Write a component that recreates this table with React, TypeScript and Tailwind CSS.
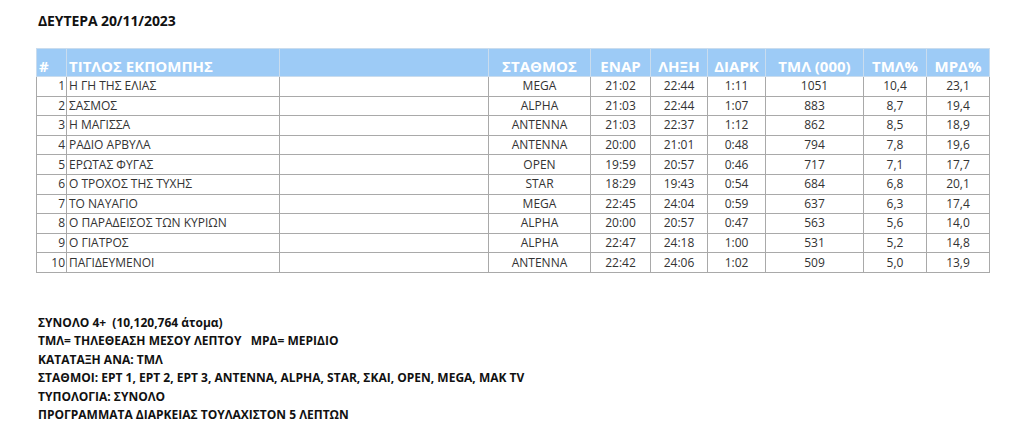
import React from "react";

const rows = [
  [1, "Η ΓΗ ΤΗΣ ΕΛΙΑΣ", "MEGA", "21:02", "22:44", "1:11", "1051", "10,4", "23,1"],
  [2, "ΣΑΣΜΟΣ", "ALPHA", "21:03", "22:44", "1:07", "883", "8,7", "19,4"],
  [3, "Η ΜΑΓΙΣΣΑ", "ANTENNA", "21:03", "22:37", "1:12", "862", "8,5", "18,9"],
  [4, "ΡΑΔΙΟ ΑΡΒΥΛΑ", "ANTENNA", "20:00", "21:01", "0:48", "794", "7,8", "19,6"],
  [5, "ΕΡΩΤΑΣ ΦΥΓΑΣ", "OPEN", "19:59", "20:57", "0:46", "717", "7,1", "17,7"],
  [6, "Ο ΤΡΟΧΟΣ ΤΗΣ ΤΥΧΗΣ", "STAR", "18:29", "19:43", "0:54", "684", "6,8", "20,1"],
  [7, "ΤΟ ΝΑΥΑΓΙΟ", "MEGA", "22:45", "24:04", "0:59", "637", "6,3", "17,4"],
  [8, "Ο ΠΑΡΑΔΕΙΣΟΣ ΤΩΝ ΚΥΡΙΩΝ", "ALPHA", "20:00", "20:57", "0:47", "563", "5,6", "14,0"],
  [9, "Ο ΓΙΑΤΡΟΣ", "ALPHA", "22:47", "24:18", "1:00", "531", "5,2", "14,8"],
  [10, "ΠΑΓΙΔΕΥΜΕΝΟΙ", "ANTENNA", "22:42", "24:06", "1:02", "509", "5,0", "13,9"],
];

const footer = [
  "ΣΥΝΟΛΟ 4+ \u00a0(10,120,764 άτομα)",
  "ΤΜΛ= ΤΗΛΕΘΕΑΣΗ ΜΕΣΟΥ ΛΕΠΤΟΥ \u00a0\u00a0ΜΡΔ= ΜΕΡΙΔΙΟ",
  "ΚΑΤΑΤΑΞΗ ΑΝΑ: ΤΜΛ",
  "ΣΤΑΘΜΟΙ: ΕΡΤ 1, ΕΡΤ 2, ΕΡΤ 3, ANTENNA, ALPHA, STAR, ΣΚΑΙ, OPEN, MEGA, MAK TV",
  "ΤΥΠΟΛΟΓΙΑ: ΣΥΝΟΛΟ",
  "ΠΡΟΓΡΑΜΜΑΤΑ ΔΙΑΡΚΕΙΑΣ ΤΟΥΛΑΧΙΣΤΟΝ 5 ΛΕΠΤΩΝ",
];

export default function App() {
  const th = "border border-[#c9dcee] text-white font-bold text-[15px] align-bottom pb-[2px] leading-none";
  const td = "border border-[#a9a9a9] text-[12px] text-[#333] leading-none px-[2px]";
  return (
    <div
      className="w-[1024px] h-[442px] bg-white overflow-hidden pl-[36px] pt-[12px]"
      style={{ fontFamily: '"Open Sans", "Noto Sans", sans-serif' }}
    >
      <div className="pl-[2px] text-[14px] font-bold text-[#111] leading-[18px] tracking-[-0.1px]">
        ΔΕΥΤΕΡΑ 20/11/2023
      </div>
      <table className="mt-[18px] table-fixed border-collapse w-[953px] border border-[#a9a9a9]">
        <colgroup>
          <col className="w-[30px]" />
          <col className="w-[213px]" />
          <col className="w-[209px]" />
          <col className="w-[102px]" />
          <col className="w-[60px]" />
          <col className="w-[57px]" />
          <col className="w-[58px]" />
          <col className="w-[98px]" />
          <col className="w-[63px]" />
          <col className="w-[63px]" />
        </colgroup>
        <thead>
          <tr className="h-[28px] bg-[#9dcbf6]">
            <th className={`${th} text-left pl-[2px]`}>#</th>
            <th className={`${th} text-left pl-[2px]`}>ΤΙΤΛΟΣ ΕΚΠΟΜΠΗΣ</th>
            <th className={th}></th>
            <th className={`${th} text-center`}>ΣΤΑΘΜΟΣ</th>
            <th className={`${th} text-center`}>ΕΝΑΡ</th>
            <th className={`${th} text-center`}>ΛΗΞΗ</th>
            <th className={`${th} text-center`}>ΔΙΑΡΚ</th>
            <th className={`${th} text-center`}>ΤΜΛ (000)</th>
            <th className={`${th} text-center`}>ΤΜΛ%</th>
            <th className={`${th} text-center`}>ΜΡΔ%</th>
          </tr>
        </thead>
        <tbody>
          {rows.map((r) => (
            <tr key={r[0] as number} className="h-[19.6px]">
              <td className={`${td} text-right pr-[1px]`}>{r[0]}</td>
              <td className={`${td} text-left`}>{r[1]}</td>
              <td className={td}></td>
              <td className={`${td} text-center`}>{r[2]}</td>
              <td className={`${td} text-center`}>{r[3]}</td>
              <td className={`${td} text-center`}>{r[4]}</td>
              <td className={`${td} text-center`}>{r[5]}</td>
              <td className={`${td} text-center`}>{r[6]}</td>
              <td className={`${td} text-center`}>{r[7]}</td>
              <td className={`${td} text-center`}>{r[8]}</td>
            </tr>
          ))}
        </tbody>
      </table>
      <div className="mt-[41px] pl-[2px] flex flex-col">
        {footer.map((f) => (
          <div key={f} className="text-[12px] font-bold text-[#111] leading-[18.5px] whitespace-pre">
            {f}
          </div>
        ))}
      </div>
    </div>
  );
}
